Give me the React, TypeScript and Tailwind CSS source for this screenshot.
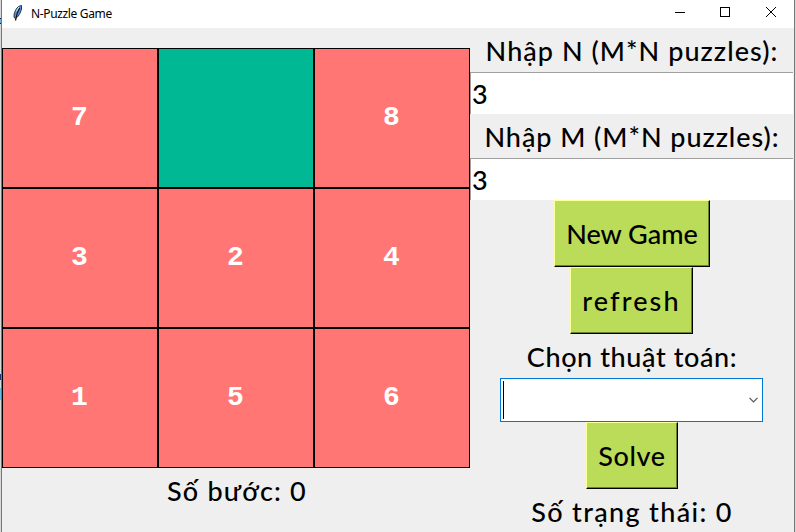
import type { ReactNode } from "react";

const tiles = [7, 0, 8, 3, 2, 4, 1, 5, 6];

function Feather() {
  return (
    <svg width="10" height="16" viewBox="0 0 10 16" className="mt-[-3px] shrink-0">
      <path d="M8.5 0.5C5.5 0.5 2.2 4.4 1.2 9L1 12.4L2.5 13.2C5 12.5 7.5 8 8.5 4Z" fill="#5a93dc" stroke="#27313d" strokeWidth="1" />
      <path d="M6.8 3L4.2 8.2L2.5 15.5" fill="none" stroke="#10151c" strokeWidth="1.2" />
      <path d="M5.8 2L3.2 6.5" stroke="#c9def5" strokeWidth="1" />
    </svg>
  );
}

function Label({ children, className }: { children: ReactNode; className: string }) {
  return (
    <div className={`flex h-11 shrink-0 items-center justify-center whitespace-pre text-[27px] leading-none ${className}`}>
      {children}
    </div>
  );
}

function Entry({ value }: { value: string }) {
  return (
    <div className="flex h-[42px] w-full shrink-0 pr-px">
      <div className="flex w-full items-center border-l border-t border-[#a0a0a0] bg-white pl-px text-[27px] leading-none">
        {value}
      </div>
    </div>
  );
}

function Button({ children, className }: { children: ReactNode; className: string }) {
  return (
    <button
      className={`flex h-[67px] shrink-0 items-center justify-center whitespace-pre border border-b-black border-l-[#ffff9c] border-r-black border-t-[#ffff9c] bg-[#badc58] text-[27px] leading-none shadow-[inset_-1px_-1px_0_#6b8032] ${className}`}
    >
      {children}
    </button>
  );
}

export default function App() {
  return (
    <div className="flex h-[532px] w-[796px] overflow-hidden bg-[#d8d8d8] font-['Comic_Sans_MS','Lato','Noto_Sans',sans-serif] font-medium text-black">
      <div className="flex w-0.5 shrink-0 flex-col border-r border-[#777]">
        <div className="mt-[18px] h-1.5 border-y border-[#102050] bg-[#6ab0d8]" />
        <div className="mt-[350px] h-1.5 bg-[#21337a]" />
        <div className="mt-2 h-3 bg-[#6db9df]" />
      </div>
      <div className="flex w-[792px] shrink-0 flex-col bg-[#efefef]">
        <header className="flex h-7 shrink-0 items-center bg-white pl-[11px] font-['Noto_Sans',sans-serif] text-[12px] font-normal">
          <Feather />
          <span className="ml-2 mt-[-1px] tracking-[-0.35px]">N-Puzzle Game</span>
          <svg width="104" height="12" viewBox="0 0 104 12" className="ml-auto mr-4 mt-[-4px]" fill="none" stroke="#000" shapeRendering="crispEdges">
            <path d="M1 6.5h10" />
            <rect x="46.5" y="1.5" width="9" height="9" />
            <path d="M92 1l10 10M102 1l-10 10" shapeRendering="auto" />
          </svg>
        </header>
        <div className="flex min-h-0 flex-1">
          <section className="w-[468px] shrink-0 pt-5">
            <div className="grid grid-cols-3">
              {tiles.map((n) => (
                <div
                  key={n}
                  className={`flex h-[140px] items-center justify-center border border-black pr-px font-['Courier_New','Liberation_Mono',monospace] text-[28px] font-bold leading-none text-white ${n ? "bg-[#ff7675]" : "bg-[#00b894]"}`}
                >
                  {n || ""}
                </div>
              ))}
            </div>
            <Label className="pl-0.5 tracking-[1.2px]">Số bước: 0</Label>
          </section>
          <section className="flex w-[324px] shrink-0 flex-col items-center">
            <Label className="tracking-[1.05px]">Nhập N (M*N puzzles):</Label>
            <Entry value="3" />
            <Label className="tracking-[0.95px]">Nhập M (M*N puzzles):</Label>
            <Entry value="3" />
            <Button className="w-[156px]">New Game</Button>
            <Button className="mr-px w-[123px] tracking-[2.1px]">refresh</Button>
            <Label className="tracking-[0.6px]">Chọn thuật toán:</Label>
            <div className="mr-px flex h-11 w-[263px] shrink-0 items-center justify-between border border-[#0078d7] bg-white pl-0.5 pr-1">
              <div className="h-[38px] w-px bg-black" />
              <svg width="9" height="6" viewBox="0 0 9 6" fill="none" stroke="#555" strokeWidth="1.2">
                <path d="M0.5 0.8L4.5 4.8L8.5 0.8" />
              </svg>
            </div>
            <Button className="w-[92px] tracking-[0.6px]">Solve</Button>
            <Label className="tracking-[1.35px]">Số trạng thái: 0</Label>
          </section>
        </div>
      </div>
      <div className="w-0.5 shrink-0 border-l border-[#777]" />
    </div>
  );
}
